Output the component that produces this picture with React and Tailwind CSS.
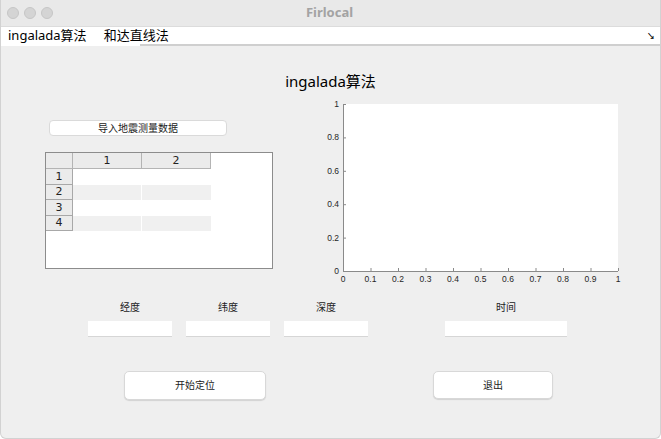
import React from "react";

const F = { fontFamily: '"Noto Sans", "Noto Sans CJK SC", sans-serif' };

function Plot() {
  const x0 = 21, x1 = 296, y0 = 8, y1 = 175;
  const yt = [0, 0.2, 0.4, 0.6, 0.8, 1];
  const xt = [0, 0.1, 0.2, 0.3, 0.4, 0.5, 0.6, 0.7, 0.8, 0.9, 1];
  return (
    <svg width="300" height="190" className="block" style={{ fontFamily: '"Liberation Sans", Arial, sans-serif' }}>
      <rect x={x0} y={y0} width={x1 - x0} height={y1 - y0} fill="#ffffff" />
      <line x1={x0 + 0.5} y1={y0} x2={x0 + 0.5} y2={y1 + 0.5} stroke="#8a8a8a" strokeWidth="1" />
      <line x1={x0} y1={y1 + 0.5} x2={x1} y2={y1 + 0.5} stroke="#8a8a8a" strokeWidth="1" />
      {yt.map((v) => {
        const y = y1 - v * (y1 - y0);
        return (
          <g key={"y" + v}>
            <line x1={x0} y1={y + 0.5} x2={x0 + 3} y2={y + 0.5} stroke="#8a8a8a" />
            <text x={x0 - 4} y={y + 3} fontSize="8.5" textAnchor="end" fill="#262626">{v === 0 || v === 1 ? v : v.toFixed(1)}</text>
          </g>
        );
      })}
      {xt.map((v) => {
        const x = x0 + v * (x1 - x0);
        return (
          <g key={"x" + v}>
            <line x1={x + 0.5} y1={y1} x2={x + 0.5} y2={y1 - 3} stroke="#8a8a8a" />
            <text x={x} y={y1 + 11} fontSize="8.5" textAnchor="middle" fill="#262626">{v === 0 || v === 1 ? v : v.toFixed(1)}</text>
          </g>
        );
      })}
    </svg>
  );
}

function Table() {
  const rows = [1, 2, 3, 4];
  return (
    <div className="w-[228px] h-[117px] border border-[#8c8c8c] bg-white text-[11px] text-[#222]" style={{ fontFamily: '"DejaVu Sans", sans-serif' }}>
      <div className="flex h-[16px]">
        <div className="w-[27px] bg-[#ebebeb] border-r border-b border-[#b4b4b4]" />
        <div className="w-[69px] bg-[#ebebeb] border-r border-b border-[#b4b4b4] flex items-center justify-center leading-none">1</div>
        <div className="w-[69px] bg-[#ebebeb] border-r border-b border-[#b4b4b4] flex items-center justify-center leading-none">2</div>
      </div>
      {rows.map((r) => (
        <div key={r} className="flex h-[15.5px]">
          <div className="w-[27px] bg-[#ebebeb] border-r border-b border-[#a8a8a8] flex items-center justify-center leading-none">{r}</div>
          <div className={"w-[69px] border-r border-white " + (r % 2 === 0 ? "bg-[#f0f0f0]" : "bg-white")} />
          <div className={"w-[69px] " + (r % 2 === 0 ? "bg-[#f0f0f0]" : "bg-white")} />
        </div>
      ))}
    </div>
  );
}

function Field({ label, w }) {
  return (
    <div className="flex flex-col items-center" style={{ width: w }}>
      <div className="h-[14px] text-[10px] leading-[14px] text-[#222]">{label}</div>
      <div className="mt-[7px] w-full h-[16px] bg-white border-b border-[#d6d6d6]" />
    </div>
  );
}

export default function App() {
  return (
    <div className="w-[661px] h-[439px] bg-white" style={F}>
      <div className="w-[661px] h-[439px] bg-[#efefef] border-x border-b border-[#d2d2d2] rounded-b-[6px] overflow-hidden flex flex-col">
        <div className="h-[26px] bg-[#e9e9e9] flex items-center relative shrink-0">
          <div className="flex gap-[5px] pl-[6px]">
            <div className="w-[12px] h-[12px] rounded-full bg-[#d4d4d4] border border-[#c6c6c6]" />
            <div className="w-[12px] h-[12px] rounded-full bg-[#d4d4d4] border border-[#c6c6c6]" />
            <div className="w-[12px] h-[12px] rounded-full bg-[#d4d4d4] border border-[#c6c6c6]" />
          </div>
          <div className="flex-1 text-center text-[13px] font-bold text-[#a3a3a3] pr-[54px]">Firlocal</div>
        </div>
        <div className="h-[1px] bg-[#dcdcdc] shrink-0" />
        <div className="h-[17px] bg-white flex items-center text-[13px] text-black shrink-0">
          <span className="ml-[7px] leading-none">ingalada算法</span>
          <span className="ml-[17px] leading-none">和达直线法</span>
          <span className="ml-auto mr-[5px] text-[8px] font-bold leading-none">↘</span>
        </div>
        <div className="flex h-[2px] shrink-0">
          <div className="w-[139px] bg-white" />
          <div className="flex-1 bg-[#cfcfcf]" />
        </div>
        <div className="text-center text-[15px] leading-[20px] text-black mt-[25px]">ingalada算法</div>
        <div className="flex items-start mt-[5px]">
          <div className="ml-[44px] w-[228px] flex flex-col">
            <div className="mt-[24px] ml-[4px] w-[178px] h-[16px] bg-white rounded-[4px] border border-[#dadada] flex items-center justify-center text-[10px] text-[#222] leading-none">导入地震测量数据</div>
            <div className="mt-[16px]">
              <Table />
            </div>
          </div>
          <div className="ml-[49px]">
            <Plot />
          </div>
        </div>
        <div className="flex mt-[14px] ml-[87px]">
          <Field label="经度" w={84} />
          <div className="ml-[14px]"><Field label="纬度" w={84} /></div>
          <div className="ml-[14px]"><Field label="深度" w={84} /></div>
          <div className="ml-[77px]"><Field label="时间" w={122} /></div>
        </div>
        <div className="flex mt-[34px]">
          <div className="ml-[123px] w-[142px] h-[29px] bg-white rounded-[5px] border border-[#d8d8d8] shadow-[0_1px_1px_rgba(0,0,0,0.12)] flex items-center justify-center text-[10px] text-[#222]">开始定位</div>
          <div className="ml-[167px] w-[120px] h-[28px] bg-white rounded-[5px] border border-[#d8d8d8] shadow-[0_1px_1px_rgba(0,0,0,0.12)] flex items-center justify-center text-[10px] text-[#222]">退出</div>
        </div>
      </div>
    </div>
  );
}
